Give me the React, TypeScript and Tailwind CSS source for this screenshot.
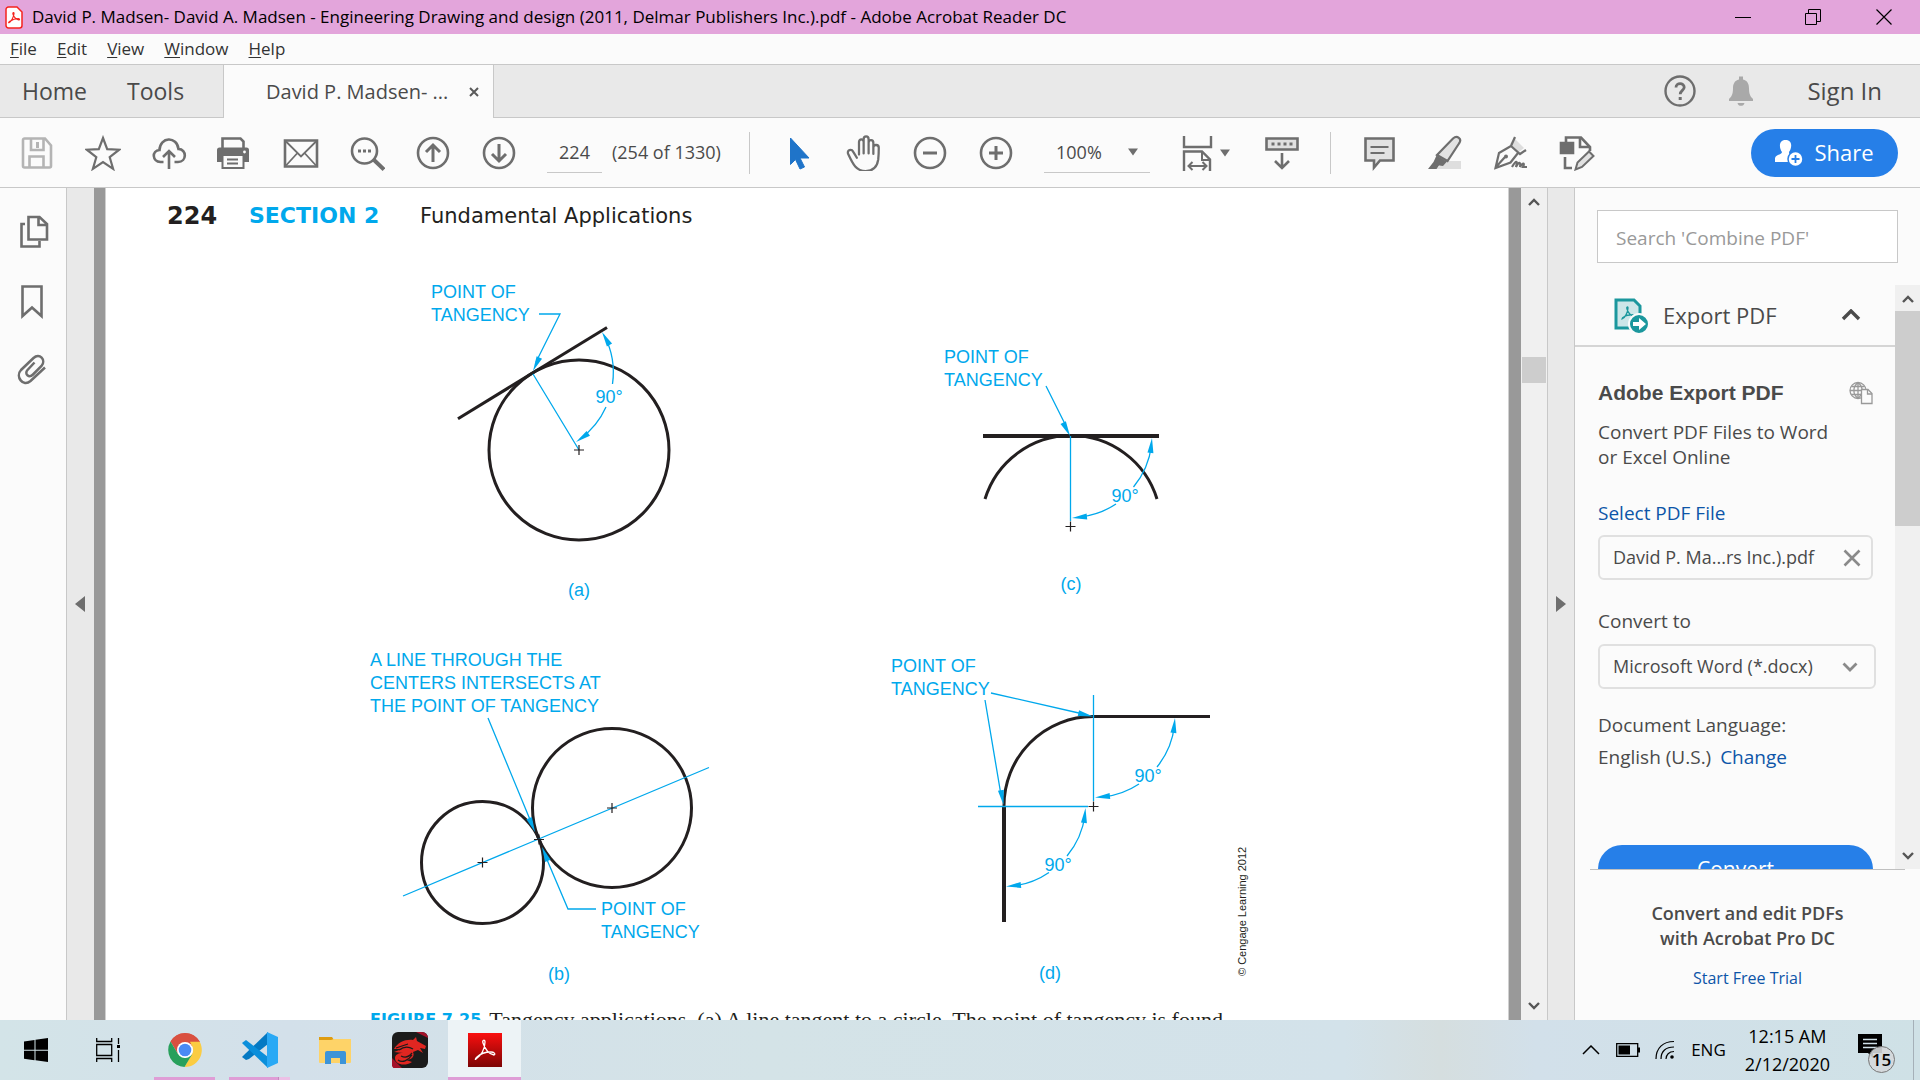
import React from "react";

type Kids = { children: React.ReactNode };

function Icon({ children }: Kids) {
  return (
    <svg viewBox="0 0 36 36" className="size-9 shrink-0" fill="none" stroke="#6e6e6e" strokeWidth="2.6" aria-hidden="true">
      {children}
    </svg>
  );
}

function ToolButton({ label, children, disabled }: Kids & { label: string; disabled?: boolean }) {
  return (
    <button type="button" aria-label={label} disabled={disabled} className="flex h-12 w-[66px] shrink-0 items-center justify-center">
      <Icon>{children}</Icon>
    </button>
  );
}

function TitleBar() {
  return (
    <header className="flex h-[34px] shrink-0 items-center bg-[#e3a5db] text-black">
      <svg viewBox="0 0 18 23" className="ml-[5px] h-[23px] w-[18px]" aria-hidden="true">
        <path d="M1 3.5a2.5 2.5 0 0 1 2.5-2.5H12l5 5v13.500a2.500 2.500 0 0 1-2.500 2.500h-11A2.500 2.500 0 0 1 1 19.500z" fill="#fff" stroke="#f5231f" strokeWidth="1.500" />
        <path d="M4.200 16.500c2-1 4.600-5.500 4.800-9 0-1.500-1.400-1.200-1.100.300.700 3 3.300 6 5.700 6.200 1.400 0 1.200-1.300-.500-1.300-2.300 0-5.600 1-8.200 2.500-1.300.900-1.600 2-.700 1.300z" fill="none" stroke="#f5231f" strokeWidth="1.200" />
      </svg>
      <h1 className="ml-[9px] flex-1 truncate text-[17px]">
        David P. Madsen- David A. Madsen - Engineering Drawing and design (2011, Delmar Publishers Inc.).pdf - Adobe Acrobat Reader DC
      </h1>
      <button type="button" aria-label="Minimize" className="flex h-full w-[70px] items-center justify-center">
        <svg viewBox="0 0 16 16" className="size-4" stroke="#000"><path d="M0 8.500h16" /></svg>
      </button>
      <button type="button" aria-label="Restore" className="flex h-full w-[70px] items-center justify-center">
        <svg viewBox="0 0 16 16" className="size-4" stroke="#000" fill="none"><path d="M.5 4.500h11v11H.5zM3.500 4V.5h12v12H12" /></svg>
      </button>
      <button type="button" aria-label="Close" className="flex h-full w-[72px] items-center justify-center">
        <svg viewBox="0 0 16 16" className="size-4" stroke="#000" strokeWidth="1.200"><path d="M.5.5l15 15M15.500.5l-15 15" /></svg>
      </button>
    </header>
  );
}

function MenuBar() {
  const items = ["File", "Edit", "View", "Window", "Help"];
  return (
    <nav aria-label="Menu" className="flex h-[31px] shrink-0 items-center gap-5 border-b border-[#c8c8c8] px-[10px] text-[17px] text-[#333]">
      {items.map((m) => (
        <button type="button" key={m}>
          <span className="underline underline-offset-2">{m[0]}</span>
          {m.slice(1)}
        </button>
      ))}
    </nav>
  );
}

function TabBar() {
  return (
    <div className="flex h-[53px] shrink-0 bg-[#e9e9e9] text-[#4a4a4a]">
      <div className="flex w-[224px] items-center gap-10 border-r border-b border-[#c8c8c8] pl-[22px] text-[23px]">
        <button type="button">Home</button>
        <button type="button">Tools</button>
      </div>
      <div className="flex w-[269px] items-center bg-[#fbfbfb] pl-[42px] text-[20px]">
        <button type="button" className="whitespace-nowrap">David P. Madsen- ...</button>
        <button type="button" aria-label="Close tab" className="mr-[11px] ml-auto flex size-4 items-center justify-center">
          <svg viewBox="0 0 10 10" className="size-[10px]" stroke="#5a5a5a" strokeWidth="2"><path d="M1 1l8 8M9 1L1 9" /></svg>
        </button>
      </div>
      <div className="flex flex-1 items-center justify-end border-b border-l border-[#c8c8c8] pr-[38px]">
        <button type="button" aria-label="Help">
          <svg viewBox="0 0 36 36" className="size-9" fill="none" stroke="#6e6e6e" aria-hidden="true">
            <circle cx="18" cy="18" r="14.500" strokeWidth="2.400" />
            <path d="M14 14.500c0-5 8.200-5 8.200-.2 0 3-4 3.200-4 7" strokeWidth="2.800" />
            <path d="M16.700 24h3v3h-3z" fill="#6e6e6e" stroke="none" />
          </svg>
        </button>
        <button type="button" aria-label="Notifications" className="ml-[25px]">
          <svg viewBox="0 0 36 36" className="size-9" fill="#a9a9a9" aria-hidden="true">
            <path d="M16 3.500h4v3c4.500 1 6 4.500 6 9 0 6 1.500 8 4 10.500V28H6v-2c2.500-2.500 4-4.500 4-10.500 0-4.500 1.500-8 6-9zM14.500 30h7c-.7 3.800-6.300 3.800-7 0z" />
          </svg>
        </button>
        <button type="button" className="ml-12 text-[24px] whitespace-nowrap">Sign In</button>
      </div>
    </div>
  );
}

function Caret() {
  return (
    <svg viewBox="0 0 10 8" className="h-2 w-[10px] shrink-0" fill="#6e6e6e" aria-hidden="true">
      <path d="M0 .5h10L5 7.500z" />
    </svg>
  );
}

function Toolbar() {
  return (
    <div className="flex h-[70px] shrink-0 items-center border-b border-[#c8c8c8] pl-1 text-[18px] text-[#4a4a4a]">
      <ToolButton label="Save" disabled>
        <path d="M4 5a1.500 1.500 0 0 1 1.500-1.500H26l6 7V31a1.500 1.500 0 0 1-1.500 1.500h-25A1.500 1.500 0 0 1 4 31zM12 4v11h12.500V4M10.500 32V21.500h14V32" stroke="#b4b4b4" />
        <path d="M17 7h3v6h-3z" fill="#b4b4b4" stroke="none" />
      </ToolButton>
      <ToolButton label="Add to starred">
        <path d="M18 3l4.200 11.200 12 .5-9.500 7.500 3.400 11.600L18 27l-10.100 6.800 3.400-11.600L1.800 14.700l12-.5z" strokeWidth="2.200" />
      </ToolButton>
      <ToolButton label="Upload to cloud">
        <path d="M12.500 27H9.500c-8.500-.500-9-11.500-1-12C9 1.500 26 1 27.500 14c8.500 0 8.500 13-.500 13h-3.500" />
        <path d="M18 34V16M12 22l6-6 6 6" />
      </ToolButton>
      <ToolButton label="Print">
        <g transform="translate(-2 0)">
          <path d="M7.500 13V3.500h18l3 3V13" />
          <path d="M2 15a2.500 2.500 0 0 1 2.500-2.500h27A2.500 2.500 0 0 1 34 15v12h-5v-6H7v6H2z" fill="#6e6e6e" stroke="none" />
          <path d="M7.500 21v12h21V21M12 24.500h11M12 28.500h11" strokeWidth="2" />
          <circle cx="29.500" cy="17" r="1.400" fill="#fff" stroke="none" />
        </g>
      </ToolButton>
      <ToolButton label="Email">
        <path d="M2 5.500h32v26H2z" />
        <path d="M3 6.500l15 15 15-15M3 30.500l11-12M33 30.500l-11-12" strokeWidth="1.800" />
      </ToolButton>
      <ToolButton label="Find text">
        <g transform="translate(1 0)">
          <circle cx="14.500" cy="16" r="12.500" />
          <path d="M23.500 24.500l10.500 10" strokeWidth="4" />
          <path d="M8 14.500h3v3H8zM13 14.500h3v3h-3zM18 14.500h3v3h-3z" fill="#6e6e6e" stroke="none" />
        </g>
      </ToolButton>
      <ToolButton label="Previous page">
        <circle cx="18" cy="18" r="15" />
        <path d="M18 27V10M11 17l7-7 7 7" strokeWidth="3" />
      </ToolButton>
      <ToolButton label="Next page">
        <circle cx="18" cy="18" r="15" />
        <path d="M18 9v17M11 19l7 7 7-7" strokeWidth="3" />
      </ToolButton>
      <input aria-label="Page number" defaultValue="224" className="ml-[15px] h-10 w-[55px] shrink-0 self-center border-b border-[#c8c8c8] bg-transparent text-center outline-none" />
      <span className="ml-[10px] w-[108px] shrink-0 whitespace-nowrap">(254 of 1330)</span>
      <span className="ml-[29px] h-[42px] w-px shrink-0 bg-[#c8c8c8]" />
      <div className="ml-[15px] flex">
        <ToolButton label="Select tool">
          <path d="M10.500 3l18.500 20-9 0 4.500 9-4.500 2-4.500-9.500-5 5z" fill="#1f74c9" stroke="#1f74c9" strokeWidth="1" strokeLinejoin="round" />
        </ToolButton>
        <ToolButton label="Hand tool">
          <g transform="translate(-0.500 -1) scale(1.080)">
            <path d="M12.500 19V7.500c0-3.400 4.300-3.400 4.300 0V5c0-3.600 4.600-3.600 4.600 0v3c.3-3.200 4.400-3 4.400.3v4c.4-3 5-2.800 5 .5 0 4 0 6.500-.5 11-1 7-5 10.500-11.700 10.500-8.600 0-11.600-6-16.100-15.800-1.500-3.800 3-5 4.700-2l3.300 5.500M16.800 6v12M21.400 6v12M25.800 9v9.500" strokeWidth="2.100" strokeLinejoin="round" strokeLinecap="round" />
          </g>
        </ToolButton>
        <ToolButton label="Zoom out">
          <circle cx="18" cy="18" r="15" />
          <path d="M11 18h14" strokeWidth="3" />
        </ToolButton>
        <ToolButton label="Zoom in">
          <circle cx="18" cy="18" r="15" />
          <path d="M11 18h14M18 11v14" strokeWidth="3" />
        </ToolButton>
      </div>
      <div className="ml-[15px] flex h-10 w-[106px] shrink-0 items-center border-b border-[#c8c8c8] pr-3 pl-3">
        <select aria-label="Zoom level" className="min-w-0 flex-1 appearance-none bg-transparent outline-none">
          <option>100%</option>
        </select>
        <Caret />
      </div>
      <button type="button" aria-label="Fit width" className="ml-[30px] flex h-12 w-[50px] shrink-0 items-center justify-between">
        <Icon>
          <path d="M4 1v11h27V1M4 36V16.500h18l8 8V36" strokeWidth="2.400" />
          <path d="M22 17v8h8M9 31h17M12.500 27l-4 4 4 4M22.500 27l4 4-4 4" strokeWidth="2" />
        </Icon>
        <Caret />
      </button>
      <button type="button" aria-label="Scroll mode" className="ml-[34px] flex h-12 w-9 shrink-0 items-center justify-center">
        <Icon>
          <path d="M2.500 3.500h31v11h-31z" fill="#e0e0e0" />
          <path d="M7.500 7.500h3v3h-3zM13.500 7.500h3v3h-3zM19.500 7.500h3v3h-3zM25.500 7.500h3v3h-3z" fill="#6e6e6e" stroke="none" />
          <path d="M18 18v15M11 26l7 7 7-7" />
        </Icon>
      </button>
      <span className="ml-[30px] h-[42px] w-px shrink-0 bg-[#c8c8c8]" />
      <div className="ml-[15px] flex">
        <ToolButton label="Add comment">
          <path d="M4.500 3.500h28v22H19l-6 7v-7H4.500z" fill="#e2e2e2" />
          <path d="M9.500 12h18M9.500 18h14" strokeWidth="2" />
        </ToolButton>
        <ToolButton label="Highlight text">
          <path d="M19 26h15v8H9z" fill="#dedede" stroke="none" />
          <path d="M26 3.500c4-3.500 9.500 0 6 5L20.500 26 10 20z" fill="#e2e2e2" strokeWidth="2.200" />
          <path d="M9.500 20.500l10.500 6-4 4.500-4-.5-2.500 3.500H1l5.500-7z" fill="#6e6e6e" stroke="none" />
        </ToolButton>
        <ToolButton label="Sign">
          <path d="M21 3l10 10-5 4-9-8z" fill="#dedede" stroke="none" />
          <path d="M22 2l-4 9 9 8 6-4M18 11L6 18 2.500 33l15-5.500L25 18M3 32l9-10" strokeWidth="2.200" />
          <circle cx="13" cy="21.500" r="2" fill="#6e6e6e" stroke="none" />
          <path d="M19 32c4-7 6-7 4 0 3-6 5-5 4 0 3-5 5-4 3 0h4" strokeWidth="2.200" />
        </ToolButton>
        <ToolButton label="Fill and sign tools">
          <path d="M7 8V2.500h15L31 12v4" />
          <path d="M21 3v9h9M6 22v11h7" />
          <path d="M2 8h12v10H2z" fill="#6e6e6e" stroke="#6e6e6e" />
          <path d="M16.500 34.500l2-7L30 16.500l4.500 4.500L23 32z" fill="#e2e2e2" strokeWidth="2" />
        </ToolButton>
      </div>
      <button type="button" className="mr-[22px] ml-auto flex h-12 w-[147px] shrink-0 items-center justify-center gap-[11px] rounded-full bg-[#267fe8] text-[22px] font-medium text-white">
        <svg viewBox="0 0 28 28" className="size-7" aria-hidden="true">
          <path d="M10.500 1c8 0 6 9 3.500 12 0 4 3 3 5 5v5H0v-4c1-4 7-3 7-6C4 9 3.500 1 10.500 1z" fill="#fff" />
          <circle cx="20.500" cy="20" r="7.500" fill="#fff" stroke="#267fe8" strokeWidth="1.500" />
          <path d="M20.500 16v8M16.500 20h8" stroke="#267fe8" strokeWidth="1.800" />
        </svg>
        Share
      </button>
    </div>
  );
}

function NavRail() {
  return (
    <aside className="flex w-[67px] shrink-0 flex-col border-r border-[#c8c8c8] pt-[26px]">
      <div className="flex flex-col items-start gap-[33px] pl-4">
        <button type="button" aria-label="Page thumbnails">
          <Icon>
            <path d="M9 10H5.500v22.500h18V27" />
            <path d="M12.500 3h11l7.500 7v15.500H12.500zM22.500 3v8H31" />
          </Icon>
        </button>
        <button type="button" aria-label="Bookmarks">
          <Icon><path d="M6.500 3.500h19v29.500L16 24.500 6.500 33z" /></Icon>
        </button>
        <button type="button" aria-label="Attachments">
          <Icon>
            <path d="M18.500 10.500l-7 7.500c-3.500 4 1.500 8.500 5.500 4.500L25.500 14c5-6-2-13.500-8-8L5 18C-1 24.500 7 35.500 14.500 29L29 15.500" strokeWidth="2.500" />
          </Icon>
        </button>
      </div>
    </aside>
  );
}

function ScrollArrow({ up }: { up?: boolean }) {
  return (
    <svg viewBox="0 0 12 12" className="size-3" fill="none" stroke="#555" strokeWidth="2.400" aria-hidden="true">
      <path d={up ? "M1 9l5-5 5 5" : "M1 3l5 5 5-5"} />
    </svg>
  );
}

const CYAN = "#00a8ec";
const INK = "#231f20";

function Arrow({ x, y, angle }: { x: number; y: number; angle: number }) {
  return <path d="M0 0L-15 3L-15 -3z" fill={CYAN} stroke="none" transform={`translate(${x} ${y}) rotate(${angle})`} />;
}

function Cross({ x, y }: { x: number; y: number }) {
  return <path d={`M${x - 5} ${y}h10M${x} ${y - 5}v10`} stroke={INK} strokeWidth="1.200" />;
}

function Note({ x, y, lines }: { x: number; y: number; lines: string[] }) {
  return (
    <text x={x} y={y} fill={CYAN} stroke="none" fontSize="18">
      {lines.map((l, i) => (
        <tspan key={l} x={x} dy={i === 0 ? 0 : 23}>{l}</tspan>
      ))}
    </text>
  );
}

function Tag({ x, y, children }: Kids & { x: number; y: number }) {
  return <text x={x} y={y} fill={CYAN} stroke="none" fontSize="18" textAnchor="middle">{children}</text>;
}

function Figures() {
  const svg = "block font-['Liberation_Sans',Arial,sans-serif] overflow-visible";
  return (
    <div className="grid grid-cols-[360px_360px] gap-x-[160px] gap-y-[30px] pl-[264px]">
      <svg viewBox="370 270 360 340" className={svg} fill="none" stroke={CYAN} strokeWidth="1.300" role="img" aria-label="Line tangent to a circle">
        <Note x={431} y={298} lines={["POINT OF", "TANGENCY"]} />
        <circle cx="579" cy="450" r="90" stroke={INK} strokeWidth="3" />
        <path d="M458 418.700L607 327.500" stroke={INK} strokeWidth="3" />
        <path d="M539 314h21L536 362M533 374l46 76M604 335A80.500 80.500 0 0 1 612.500 384M606 407A80.500 80.500 0 0 1 580 439" />
        <Arrow x={533} y={371} angle={115} />
        <Arrow x={602} y={332} angle={-120} />
        <Arrow x={576} y={442} angle={145} />
        <Tag x={609} y={403}>90°</Tag>
        <Cross x={579} y={450} />
        <Tag x={579} y={596}>(a)</Tag>
      </svg>
      <svg viewBox="890 270 360 340" className={svg} fill="none" stroke={CYAN} strokeWidth="1.300" role="img" aria-label="Line tangent to an arc">
        <Note x={944} y={363} lines={["POINT OF", "TANGENCY"]} />
        <path d="M983 436h176" stroke={INK} strokeWidth="4" />
        <path d="M985 499A90 90 0 0 1 1157 499" stroke={INK} strokeWidth="3" />
        <path d="M1046 386l20 40M1070.500 436v85M1151.500 445A81 81 0 0 1 1133.500 487M1116 504A81 81 0 0 1 1080 517" />
        <Arrow x={1070} y={436} angle={63} />
        <Arrow x={1152} y={438} angle={-84} />
        <Arrow x={1072} y={518} angle={174} />
        <Tag x={1125} y={502}>90°</Tag>
        <Cross x={1070.5} y={526.5} />
        <Tag x={1071} y={590}>(c)</Tag>
      </svg>
      <svg viewBox="370 640 360 360" className={svg} fill="none" stroke={CYAN} strokeWidth="1.300" role="img" aria-label="Two tangent circles">
        <Note x={370} y={666} lines={["A LINE THROUGH THE", "CENTERS INTERSECTS AT", "THE POINT OF TANGENCY"]} />
        <circle cx="612" cy="808" r="79.500" stroke={INK} strokeWidth="3" />
        <circle cx="482.500" cy="862.500" r="61" stroke={INK} strokeWidth="3" />
        <path d="M403 896L709 767.500M488 718l43 104M596 909h-28L545 855" />
        <Arrow x={535} y={832} angle={67} />
        <Arrow x={542} y={847} angle={-113} />
        <Cross x={612} y={808} />
        <Cross x={482.5} y={862.5} />
        <Cross x={539} y={839.5} />
        <Note x={601} y={915} lines={["POINT OF", "TANGENCY"]} />
        <Tag x={559} y={980}>(b)</Tag>
      </svg>
      <svg viewBox="890 640 360 360" className={svg} fill="none" stroke={CYAN} strokeWidth="1.300" role="img" aria-label="Arc tangent to two perpendicular lines">
        <Note x={891} y={672} lines={["POINT OF", "TANGENCY"]} />
        <path d="M1210 716.500h-117A89 89.500 0 0 0 1004 806" stroke={INK} strokeWidth="3" />
        <path d="M1004 806v116" stroke={INK} strokeWidth="4" />
        <path d="M991 693l90 20.500M985 700l16 95M1093.500 695v106M978 806.500h110M1174.500 725A81 81 0 0 1 1157 767M1139 784A81 81 0 0 1 1103 797M1085 815A81 81 0 0 1 1067 856M1049 872.500A81 81 0 0 1 1014 886" />
        <Arrow x={1093} y={716.5} angle={13} />
        <Arrow x={1003.5} y={805} angle={80} />
        <Arrow x={1175} y={718} angle={-84} />
        <Arrow x={1095} y={797.5} angle={174} />
        <Arrow x={1085.5} y={808} angle={-84} />
        <Arrow x={1006} y={886.5} angle={174} />
        <Tag x={1148} y={782}>90°</Tag>
        <Tag x={1058} y={871}>90°</Tag>
        <Cross x={1093.5} y={806.5} />
        <Tag x={1050} y={979}>(d)</Tag>
        <text transform="translate(1246 976) rotate(-90)" fill={INK} stroke="none" fontSize="11">
          © Cengage Learning 2012
        </text>
      </svg>
    </div>
  );
}

function DocumentView() {
  return (
    <main className="flex min-w-0 flex-1 bg-[#999]">
      <div className="flex w-[27px] shrink-0 items-center bg-[#e9e9e9]">
        <button type="button" aria-label="Show navigation pane" className="ml-2">
          <svg viewBox="0 0 10 16" className="h-4 w-[10px]" fill="#6e6e6e"><path d="M10 0v16L0 8z" /></svg>
        </button>
      </div>
      <article className="ml-[11px] min-w-0 flex-1 overflow-hidden border-x border-[#d0d0d0] bg-white text-[#231f20]">
        <div className="flex h-[82px] items-start pt-[14px] pl-[61px] font-['DejaVu_Sans',sans-serif] text-[21px] leading-7">
          <span className="w-[82px] text-[24px] font-bold">224</span>
          <span className="w-[171px] text-[22px] font-bold text-[#00a8ec]">SECTION 2</span>
          <span>Fundamental Applications</span>
        </div>
        <Figures />
        <p className="flex gap-2 pt-[6px] pl-[264px] leading-7 whitespace-nowrap">
          <b className="font-['DejaVu_Sans',sans-serif] text-[16px] text-[#00a8ec]">FIGURE 7.25</b>
          <span className="font-['Liberation_Serif',serif] text-[22px]">
            Tangency applications. (a) A line tangent to a circle. The point of tangency is found
          </span>
        </p>
      </article>
      <div className="ml-3 flex w-[26px] shrink-0 flex-col items-center bg-[#f0f0f0] py-2">
        <ScrollArrow up />
        <span className="mt-[149px] mb-auto h-[26px] w-6 bg-[#cdcdcd]" />
        <ScrollArrow />
      </div>
      <div className="flex w-7 shrink-0 items-center justify-center border-x border-[#c8c8c8] bg-[#e9e9e9]">
        <button type="button" aria-label="Hide tools pane">
          <svg viewBox="0 0 10 16" className="h-4 w-[10px]" fill="#6e6e6e"><path d="M0 0v16l10-8z" /></svg>
        </button>
      </div>
    </main>
  );
}

function ToolsPane() {
  const link = "text-[#0d55a8]";
  return (
    <aside className="flex w-[345px] shrink-0 flex-col text-[19px] text-[#4a4a4a]">
      <div className="px-[22px] pt-[22px] pb-[22px]">
        <input type="search" aria-label="Search tools" placeholder="Search 'Combine PDF'" className="h-[53px] w-full border border-[#c8c8c8] bg-white px-[18px] pt-[2px] outline-none placeholder:text-[#999]" />
      </div>
      <div className="flex min-h-0 flex-1">
        <div className="min-w-0 flex-1 overflow-hidden">
          <button type="button" className="flex h-[62px] w-full items-center border-b-2 border-[#d5d5d5] pr-[34px] pl-[38px] text-[22px]">
            <svg viewBox="0 0 36 36" className="size-9" aria-hidden="true">
              <path d="M3 3h18l6 6v22H3z" fill="#cde6e8" stroke="#1b979d" strokeWidth="3" />
              <path d="M9 22c3-1 6-7 6-11 0-2-2-1-1 1 1 4 4 7 7 7 2-1-1-2-4-1-3 0-8 2-8 4z" fill="none" stroke="#1b979d" strokeWidth="1.300" />
              <circle cx="26" cy="27" r="10" fill="#1b979d" stroke="#fbfbfb" strokeWidth="2" />
              <path d="M20 25h6v-4l7 6-7 6v-4h-6z" fill="#fff" />
            </svg>
            <span className="ml-[14px]">Export PDF</span>
            <svg viewBox="0 0 20 12" className="ml-auto h-3 w-5" fill="none" stroke="#4a4a4a" strokeWidth="3.400" aria-hidden="true"><path d="M2 10l8-8 8 8" /></svg>
          </button>
          <div className="pr-[22px] pl-[23px] leading-[25px]">
            <div className="flex items-center pt-[33px]">
              <h2 className="font-['Liberation_Sans',Arial,sans-serif] text-[21px] font-bold">Adobe Export PDF</h2>
              <svg viewBox="0 0 24 24" className="ml-auto size-6" fill="none" stroke="#999" strokeWidth="1.300" aria-hidden="true">
                <circle cx="9" cy="9.500" r="8" />
                <path d="M1 9.500h16M2.500 5.500h13M2.500 13.500h10M9 1.500v16M9 1.500C3.500 6 3.500 13 9 17.500M9 1.500c5.500 4.500 5.500 11 0 16" />
                <path d="M12.500 8.500h6.500l4 4v10H12.500z" fill="#fbfbfb" />
                <path d="M18.500 8.500v4.500h4.500" />
              </svg>
            </div>
            <p className="pt-[15px] whitespace-nowrap">Convert PDF Files to Word<br />or Excel Online</p>
            <a href="#select" className={`mt-[31px] block ${link}`}>Select PDF File</a>
            <div className="mt-[9px] flex h-[45px] items-center rounded-md border-2 border-[#e0e0e0] px-[13px] text-[18px]">
              <span className="whitespace-nowrap">David P. Ma...rs Inc.).pdf</span>
              <button type="button" aria-label="Remove file" className="-mr-[10px] ml-auto flex size-8 items-center justify-center">
                <svg viewBox="0 0 18 18" className="size-[18px]" stroke="#8a8a8a" strokeWidth="2.600"><path d="M1.500 1.500l15 15M16.500 1.500l-15 15" /></svg>
              </button>
            </div>
            <label htmlFor="format" className="mt-[29px] block">Convert to</label>
            <div className="mt-[10px] -mr-[3px] flex h-[45px] items-center rounded-md border-2 border-[#e0e0e0] pr-4 pl-[13px] text-[18px]">
              <select id="format" className="min-w-0 flex-1 appearance-none bg-transparent outline-none">
                <option>Microsoft Word (*.docx)</option>
              </select>
              <svg viewBox="0 0 16 10" className="h-[10px] w-4 shrink-0" fill="none" stroke="#8a8a8a" strokeWidth="2.800" aria-hidden="true"><path d="M1.500 1.500l6.500 6.500 6.500-6.500" /></svg>
            </div>
            <p className="mt-6">Document Language:</p>
            <p className="mt-[7px]">
              English (U.S.) <a href="#language" className={`ml-1 ${link}`}>Change</a>
            </p>
            <button type="button" className="mt-[75px] h-12 w-full rounded-full bg-[#267fe8] text-[21px] text-white">Convert</button>
          </div>
        </div>
        <div className="flex w-[25px] shrink-0 flex-col items-center bg-[#f0f0f0] pt-2 pb-[7px]">
          <ScrollArrow up />
          <span className="mt-[6px] mb-auto h-[215px] w-full bg-[#cdcdcd]" />
          <ScrollArrow />
        </div>
      </div>
      <div className="mx-[15px] h-[151px] shrink-0 border-t border-[#c0c0c0] pt-[31px] text-center leading-[25px]">
        <p className="text-[18px] font-semibold">Convert and edit PDFs<br />with Acrobat Pro DC</p>
        <a href="#trial" className={`mt-[15px] block text-[16px] ${link}`}>Start Free Trial</a>
      </div>
    </aside>
  );
}

function Running({ windows = 1 }: { windows?: number }) {
  return (
    <span className="absolute inset-x-0 bottom-0 flex h-[3px]">
      <span className="flex-1 bg-[#df9dd6]" />
      {windows > 1 && <span className="w-3 border-l border-[#c48abd] bg-[#ecc0e6]" />}
    </span>
  );
}

function Taskbar() {
  const btn = "relative flex h-full items-center justify-center";
  return (
    <footer className="flex h-[60px] shrink-0 items-center bg-[linear-gradient(90deg,#d3e4e8,#d3e0ea_15%,#d4e3e7_40%,#d3e2ea_70%,#d5dedf_75%,#d2e0ea_80%,#cfe1e6)] text-[17px] text-black">
      <button type="button" aria-label="Start" className="flex h-full w-[72px] items-center justify-center">
        <svg viewBox="0 0 24 24" className="size-6"><path d="M0 3.500l10.500-1.500v9.700H0zM11.500 1.800L24 0v11.700H11.500zM0 12.700h10.500v9.500L0 20.700zM11.500 12.700H24V24l-12.500-1.700z" /></svg>
      </button>
      <button type="button" aria-label="Task view" className="flex h-full w-[72px] items-center justify-center">
        <svg viewBox="0 0 24 24" className="size-6" fill="none" stroke="#000" strokeWidth="1.300"><path d="M.7 0v3.500h15V0M.7 6.500h15v11H.7zM.7 24v-3.500h15V24M22.500 0v6M22.500 12v12" /><path d="M21 7h3v3h-3z" fill="#000" stroke="none" /></svg>
      </button>
      <button type="button" aria-label="Google Chrome" className={`${btn} ml-[10px] w-[61px]`}>
        <svg viewBox="0 0 34 34" className="size-[34px]">
          <path d="M17 17L2.700 8.500A17 17 0 0 1 32 9z" fill="#d95040" />
          <path d="M17 0a17 17 0 0 1 14.700 8.800H17L10 21 2.500 8.500A17 17 0 0 1 17 0z" fill="#d95040" />
          <path d="M31.700 8.800A17 17 0 0 1 16.500 34l7.500-13a8 8 0 0 0 0-8l-2-4.200z" fill="#fbcc42" />
          <path d="M2.500 8.500A17 17 0 0 0 16.500 34L24 21.500 17 25l-7-4z" fill="#28a05c" />
          <circle cx="17" cy="17" r="8" fill="#fff" /><circle cx="17" cy="17" r="6.300" fill="#4a8af4" />
        </svg>
        <Running />
      </button>
      <button type="button" aria-label="Visual Studio Code" className={`${btn} ml-[14px] w-[61px]`}>
        <svg viewBox="0 0 36 36" className="size-9">
          <path d="M26 0L3 22l-3 3 4 3 3-1L26 12z" fill="#0479c3" />
          <path d="M0 11l4-3 22 17v11L2 13z" fill="#0b8fdb" />
          <path d="M25 0l11 5v26l-11 5z" fill="#2aa9f5" />
        </svg>
        <Running windows={2} />
      </button>
      <button type="button" aria-label="File Explorer" className={`${btn} ml-[14px] w-[61px]`}>
        <svg viewBox="0 0 34 30" className="h-[30px] w-[34px]">
          <path d="M1 2h13l2 3-2 3H1z" fill="#df9c10" /><path d="M1 5h12l3-1h17v23a1 1 0 0 1-1 1H2a1 1 0 0 1-1-1z" fill="#fed368" />
          <path d="M7 28V18a2 2 0 0 1 2-2h17a2 2 0 0 1 2 2v11h-6v-6H13v6H7z" fill="#3d94d8" />
        </svg>
      </button>
      <button type="button" aria-label="Dragon Center" className={`${btn} ml-[14px] w-[61px]`}>
        <svg viewBox="0 0 36 36" className="size-9">
          <rect width="36" height="36" rx="6" fill="#1b1b1b" />
          <path d="M24 0h6a6 6 0 0 1 6 6zM0 26v4a6 6 0 0 0 10 6z" fill="#a3122a" />
          <path d="M2 17c4-7 12-10 19-9l3-3 1 4 9 5-1 3-5-1 3 5-5-3-5 2c2 4-1 8-7 8l6 2c-8 5-17 2-17-4 0-3 3-5 8-5l-9-1 8-3z" fill="#e02621" />
          <path d="M7 18c4-3 9-4 14-1M6 28c4 3 10 1 14-5M4 16l12-4M9 24c4 2 8 1 11-3" fill="none" stroke="#1b1b1b" strokeWidth="1.300" />
        </svg>
      </button>
      <button type="button" aria-label="Adobe Acrobat Reader" className={`${btn} ml-2 w-[73px] bg-[#edf3f6]`}>
        <svg viewBox="0 0 34 34" className="size-[34px]">
          <defs><linearGradient id="acro" x2="0" y2="1"><stop stopColor="#fa0f0f" /><stop offset="1" stopColor="#7d0505" /></linearGradient></defs>
          <path d="M0 0h34v34H0z" fill="url(#acro)" />
          <path d="M8 26c5-3 9-10 9-17 0-3-3-2-2 1 2 6 6 11 11 12 2-1 0-3-3-3-5 0-11 2-14 5-2 2-2 3-1 2z" fill="none" stroke="#fff" strokeWidth="1.300" />
        </svg>
        <Running />
      </button>
      <div className="ml-auto flex h-full items-center">
        <button type="button" aria-label="Show hidden icons">
          <svg viewBox="0 0 18 10" className="h-[10px] w-[18px]" fill="none" stroke="#000" strokeWidth="1.500"><path d="M1 9l8-8 8 8" /></svg>
        </button>
        <svg viewBox="0 0 24 14" className="ml-4 h-[14px] w-6" role="img" aria-label="Battery"><path d="M.7.7h21v12.600H.7z" fill="none" stroke="#000" strokeWidth="1.300" /><path d="M2.500 2.500H14v9H2.500zM22 4.500h2v5h-2z" /></svg>
        <svg viewBox="0 0 20 20" className="ml-[15px] size-5" role="img" aria-label="Wireless network" fill="none" stroke="#000" strokeWidth="1.200">
          <path d="M1 19C1 8 8 1.500 19 1.500M6 19c0-8 5-12 13-12M11 19c0-4 3-7.500 8-7.500" /><circle cx="17" cy="17" r="1.800" fill="#000" stroke="none" />
        </svg>
        <button type="button" className="ml-4">ENG</button>
        <time className="ml-[19px] text-center text-[18px] leading-7">12:15 AM<br />2/12/2020</time>
        <button type="button" aria-label="Notifications" className="relative mr-[31px] ml-7 h-11 w-6">
          <svg viewBox="0 0 24 24" className="mb-2 size-6"><path d="M0 0h24v19h-9v5l-5-5H0z" /><path d="M5 5.500h14M5 9.500h14M5 13.500h14" stroke="#d0e0e8" strokeWidth="1.300" /></svg>
          <span className="absolute top-[18px] left-[10px] flex size-[27px] items-center justify-center rounded-full border border-[#777] bg-[#d5d8da]/90 text-[17px] font-semibold">15</span>
        </button>
        <span className="mr-[6px] h-full w-px bg-[#a5b0b8]" />
      </div>
    </footer>
  );
}

export default function App() {
  return (
    <div className="flex h-screen flex-col overflow-hidden bg-[#fbfbfb] font-['Open_Sans','Noto_Sans',sans-serif]">
      <TitleBar />
      <MenuBar />
      <TabBar />
      <Toolbar />
      <div className="flex min-h-0 flex-1">
        <NavRail />
        <DocumentView />
        <ToolsPane />
      </div>
      <Taskbar />
    </div>
  );
}
